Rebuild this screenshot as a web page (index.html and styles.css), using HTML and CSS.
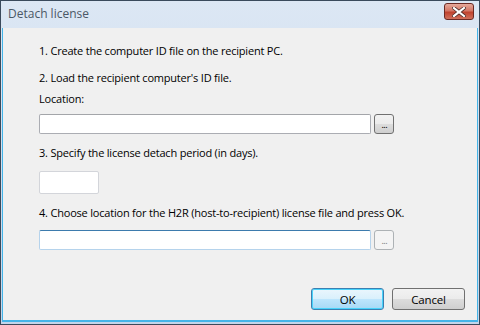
FILE: index.html
```html
<!DOCTYPE html>
<html lang="en">
<head>
  <meta charset="UTF-8" />
  <title>Detach license</title>
  <link rel="stylesheet" href="styles.css">
</head>
<body>
<div class="window">

  <!-- TITLE BAR -->
  <div class="titlebar">
    <span class="title">Detach license</span>
    <span class="btn-close">
      <svg width="14" height="10" viewBox="0 0 14 10">
        <path d="M2 1 L12 9 M12 1 L2 9" stroke="#4a2a26" stroke-width="3.6" stroke-linecap="square"/>
        <path d="M2 1 L12 9 M12 1 L2 9" stroke="#fff" stroke-width="2.2" stroke-linecap="square"/>
      </svg>
    </span>
  </div>

  <!-- CLIENT -->
  <div class="client">
    <p class="step first">1. Create the computer ID file on the recipient PC.</p>

    <p class="step second">2. Load the recipient computer's ID file.</p>
    <p class="label">Location:</p>
    <div class="row row-one">
      <input class="field wide" />
      <button class="btn-browse">...</button>
    </div>

    <p class="step third">3. Specify the license detach period (in days).</p>
    <input class="field small" />

    <p class="step fourth">4. Choose location for the H2R (host-to-recipient) license file and press OK.</p>
    <div class="row row-two">
      <input class="field wide focused" />
      <button class="btn-browse disabled">...</button>
    </div>

    <div class="actions">
      <button class="btn default">OK</button>
      <button class="btn">Cancel</button>
    </div>
  </div>

</div>
</body>
</html>
```

FILE: styles.css
```css
body {
  margin: 0;
  font-family: 'Open Sans', 'Noto Sans', sans-serif;
  font-size: 11px;
  letter-spacing: -0.2px;
  color: #000;
}
.window {
  width: 480px;
  height: 325px;
  box-sizing: border-box;
  border: 1px solid #3a4a5c;
  background: linear-gradient(#dce7f4, #c3d5ea);
  display: flex;
  flex-direction: column;
}
.titlebar {
  height: 27px;
  display: flex;
  align-items: center;
  justify-content: space-between;
  padding: 0 5px 0 7px;
}
.title {
  color: #4b5866;
  font-size: 12px;
  letter-spacing: 0;
  margin-top: -2px;
}
.btn-close {
  width: 30px;
  height: 17px;
  box-sizing: border-box;
  border: 1px solid #6b2a24;
  border-radius: 3px;
  background: linear-gradient(#e6a99b, #d47766 45%, #c0432f 55%, #d0705c);
  display: flex;
  align-items: center;
  justify-content: center;
  margin-top: -6px;
}
.client {
  flex: 1;
  margin: 0 1px 2px 1px;
  border-right: 1px solid #44b4e8;
  border-bottom: 2px solid #44b4e8;
  border-left: 1px solid #44b4e8;
  background: #f0f0f0;
  padding: 0 12px 0 36px;
  display: flex;
  flex-direction: column;
}
.step, .label {
  margin: 0;
  height: 16px;
  line-height: 16px;
  white-space: nowrap;
}
.step.first { margin-top: 15px; }
.step.second { margin-top: 11px; }
.label { margin-top: 5px; }
.step.third { margin-top: 11px; }
.step.fourth { margin-top: 11px; }
.row {
  display: flex;
  align-items: center;
  gap: 3px;
}
.row-one { margin-top: 6px; }
.row-two { margin-top: 8px; }
.field {
  box-sizing: border-box;
  height: 20px;
  border: 1px solid #abadb3;
  border-top-color: #a3a5a9;
  border-radius: 2px;
  background: #fff;
  margin: 0;
  padding: 0;
  outline: none;
}
.field.wide { width: 332px; }
.field.small {
  width: 60px;
  height: 23px;
  margin-top: 10px;
  border-color: #d3d5da;
}
.field.focused {
  border-color: #b5d3ec;
  border-top-color: #3d7bad;
}
.btn-browse {
  box-sizing: border-box;
  width: 20px;
  height: 20px;
  margin: 1px 0 0 0;
  padding: 0 0 6px 0;
  border: 1px solid #707070;
  border-radius: 3px;
  background: linear-gradient(#f2f2f2, #ebebeb 50%, #dddddd 50%, #cfcfcf);
  font-family: 'DejaVu Sans', sans-serif;
  font-size: 9px;
  letter-spacing: -1px;
  line-height: 20px;
  color: #000;
}
.btn-browse.disabled {
  border-color: #adb2b5;
  background: #f4f4f4;
  color: #838383;
}
.actions {
  margin-top: auto;
  margin-bottom: 10px;
  display: flex;
  justify-content: flex-end;
  gap: 8px;
}
.btn {
  box-sizing: border-box;
  width: 73px;
  height: 22px;
  margin: 0;
  padding: 0;
  border: 1px solid #707070;
  border-radius: 3px;
  background: linear-gradient(#f2f2f2, #ebebeb 50%, #dddddd 50%, #cfcfcf);
  font-family: 'Open Sans', 'Noto Sans', sans-serif;
  font-size: 11.5px;
  letter-spacing: -0.2px;
  color: #000;
}
.btn.default {
  border-color: #3c7fb1;
  box-shadow: inset 0 0 0 1px #48d3fb;
  background: linear-gradient(#eaf6fd, #d9f0fc 50%, #bee6fd 50%, #a7d9f5);
}
```
